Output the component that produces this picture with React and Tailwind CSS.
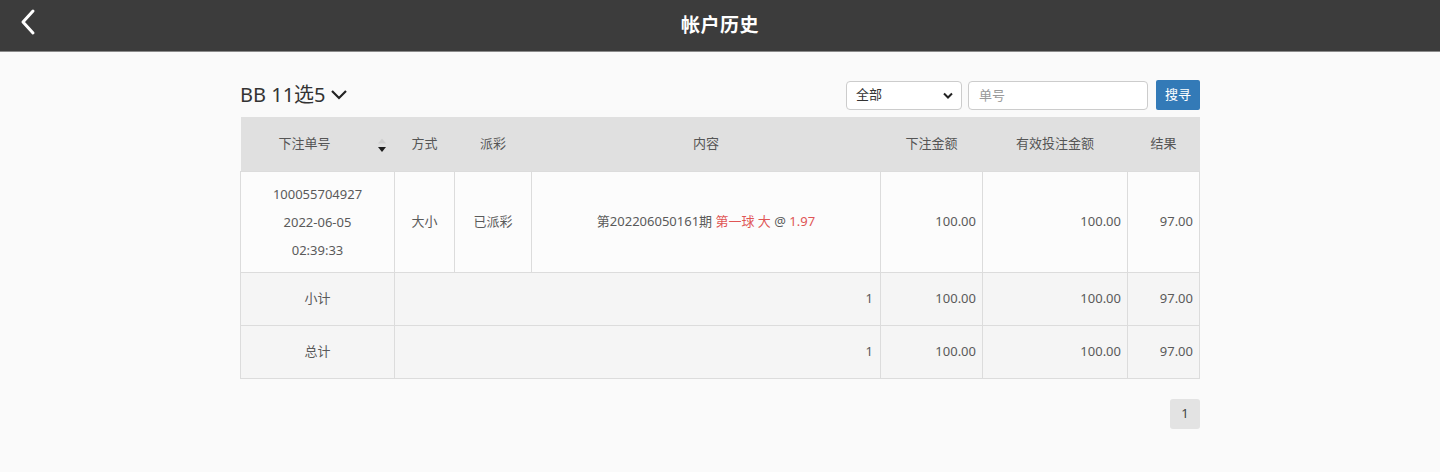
const FONT = { fontFamily: '"Noto Sans", "Noto Sans CJK SC", sans-serif' };

const COLS = [154, 60, 77, 349, 102, 145, 72];

function SortIcon() {
  return (
    <svg width="10" height="18" viewBox="0 0 10 18" className="ml-auto mt-[4px]">
      <path d="M5 1.5 L9 6.5 L1 6.5 Z" fill="#cfcfcf" />
      <path d="M1 10 L9 10 L5 15 Z" fill="#1e1e1e" />
    </svg>
  );
}

export default function App() {
  const cell = 'border border-[#dcdcdc] text-[13px] text-[#5a5a5a]';
  return (
    <div className="min-h-[472px] bg-[#fafafa]" style={FONT}>
      <header className="relative flex h-[52px] items-center justify-center bg-[#3c3c3c] border-b border-[#8a8a8a]">
        <button className="absolute left-[18px] top-[8px] p-0">
          <svg width="22" height="28" viewBox="0 0 22 28" fill="none">
            <path d="M15 3 L5 14 L15 25" stroke="#fff" strokeWidth="3" strokeLinecap="round" strokeLinejoin="round" />
          </svg>
        </button>
        <h1 className="text-[19px] font-bold text-white tracking-wide">帐户历史</h1>
      </header>

      <main className="mx-auto w-[960px] pt-[28px]">
        <div className="flex h-[30px] items-center justify-between mb-[7px]">
          <div className="flex items-center gap-[4px] text-[20px] text-[#333]">
            <span>BB 11选5</span>
            <svg width="18" height="12" viewBox="0 0 18 12" fill="none">
              <path d="M2 2 L9 9 L16 2" stroke="#222" strokeWidth="2.2" />
            </svg>
          </div>
          <div className="flex items-center">
            <div className="relative flex h-[29px] w-[116px] items-center rounded-[4px] border border-[#ccc] bg-white pl-[9px] text-[13px] text-[#333]">
              全部
              <svg className="absolute right-[8px] top-[10px]" width="10" height="8" viewBox="0 0 10 8" fill="none">
                <path d="M1 1.5 L5 5.5 L9 1.5" stroke="#222" strokeWidth="2" />
              </svg>
            </div>
            <input
              placeholder="单号"
              className="ml-[6px] h-[29px] w-[180px] rounded-[4px] border border-[#ccc] bg-white px-[10px] text-[13px] text-[#333] placeholder:text-[#999] outline-none"
            />
            <button className="ml-[8px] h-[30px] w-[44px] rounded-[2px] bg-[#337ab7] text-[13px] text-white">搜寻</button>
          </div>
        </div>

        <table className="w-[960px] table-fixed border-collapse">
          <colgroup>
            {COLS.map((w, i) => (
              <col key={i} style={{ width: w }} />
            ))}
          </colgroup>
          <thead>
            <tr className="h-[54px] bg-[#e0e0e0] text-[13px] text-[#555]">
              <th className="font-normal pl-[10px] pr-[8px]">
                <div className="flex items-center">
                  <span className="ml-[28px]">下注单号</span>
                  <SortIcon />
                </div>
              </th>
              <th className="font-normal">方式</th>
              <th className="font-normal">派彩</th>
              <th className="font-normal">内容</th>
              <th className="font-normal">下注金额</th>
              <th className="font-normal">有效投注金额</th>
              <th className="font-normal">结果</th>
            </tr>
          </thead>
          <tbody>
            <tr className="h-[101px] bg-[#fcfcfc]">
              <td className={`${cell} text-center leading-[28px]`}>
                <div>100055704927</div>
                <div>2022-06-05</div>
                <div>02:39:33</div>
              </td>
              <td className={`${cell} text-center`}>大小</td>
              <td className={`${cell} text-center`}>已派彩</td>
              <td className={`${cell} text-center`}>
                第202206050161期 <span className="text-[#e05555]">第一球 大</span> @ <span className="text-[#e05555]">1.97</span>
              </td>
              <td className={`${cell} text-right pr-[6px]`}>100.00</td>
              <td className={`${cell} text-right pr-[6px]`}>100.00</td>
              <td className={`${cell} text-right pr-[6px]`}>97.00</td>
            </tr>
            {['小计', '总计'].map((label) => (
              <tr key={label} className="h-[53px] bg-[#f5f5f5]">
                <td className={`${cell} text-center`}>{label}</td>
                <td colSpan={3} className={`${cell} text-right pr-[7px]`}>1</td>
                <td className={`${cell} text-right pr-[6px]`}>100.00</td>
                <td className={`${cell} text-right pr-[6px]`}>100.00</td>
                <td className={`${cell} text-right pr-[6px]`}>97.00</td>
              </tr>
            ))}
          </tbody>
        </table>

        <div className="mt-[20px] flex justify-end">
          <span className="flex h-[30px] w-[30px] items-center justify-center rounded-[3px] bg-[#e3e3e3] text-[13px] text-[#444]">1</span>
        </div>
      </main>
    </div>
  );
}
